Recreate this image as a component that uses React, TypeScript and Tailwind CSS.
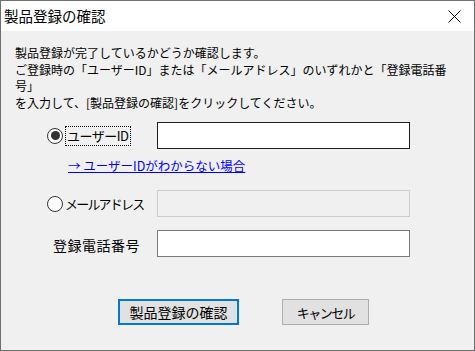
import React from "react";

function Radio({ checked }: { checked?: boolean }) {
  return (
    <span className="w-[16px] h-[16px] rounded-full border border-[#333333] bg-white flex items-center justify-center shrink-0">
      {checked ? <span className="w-[9px] h-[9px] rounded-full bg-[#333333]" /> : null}
    </span>
  );
}

export default function App() {
  return (
    <div className="w-[475px] h-[351px] border border-[#6f6f6f] bg-[#f0f0f0] flex flex-col font-['Noto_Sans_CJK_JP','Noto_Sans',sans-serif] text-black overflow-hidden">
      <div className="h-[30px] bg-white flex items-center justify-between shrink-0">
        <span className="pl-[3px] text-[14.5px] leading-none">製品登録の確認</span>
        <svg width="13" height="13" viewBox="0 0 13 13" className="mr-[13px]">
          <path d="M0.5 0.5 L12.5 12.5 M12.5 0.5 L0.5 12.5" stroke="#000" strokeWidth="1" fill="none" />
        </svg>
      </div>
      <div className="flex-1 flex flex-col pt-[14px]">
        <p className="pl-[14px] text-[12px] leading-[16.5px]">
          製品登録が完了しているかどうか確認します。
          <br />
          ご登録時の「ユーザーID」または「メールアドレス」のいずれかと「登録電話番
          <br />
          号」
          <br />
          を入力して、[製品登録の確認]をクリックしてください。
        </p>

        <div className="mt-[11px] flex items-center h-[27px]">
          <div className="w-[156px] flex items-center pl-[46px] shrink-0">
            <Radio checked />
            <span className="ml-[2px] h-[20px] flex items-center border border-dotted border-black px-[1px] text-[13px] tracking-[-0.5px] leading-none">
              ユーザーID
            </span>
          </div>
          <div className="w-[253px] h-[27px] border border-[#1e1e1e] bg-white" />
        </div>

        <div className="mt-[9px] pl-[67px] h-[15px] flex items-center">
          <span className="text-[12.5px] leading-[15px] text-[#0000ff] underline">→ ユーザーIDがわからない場合</span>
        </div>

        <div className="mt-[17px] flex items-center h-[27px]">
          <div className="w-[156px] flex items-center pl-[46px] shrink-0">
            <Radio />
            <span className="ml-[2px] text-[13px] tracking-[-1.8px] leading-none">メールアドレス</span>
          </div>
          <div className="w-[253px] h-[27px] border border-[#cccccc] bg-[#f0f0f0]" />
        </div>

        <div className="mt-[13px] flex items-center h-[27px]">
          <div className="w-[156px] pl-[52px] shrink-0">
            <span className="text-[14px] tracking-[0.5px] leading-none">登録電話番号</span>
          </div>
          <div className="w-[253px] h-[27px] border border-[#7a7a7a] bg-white" />
        </div>

        <div className="mt-[42px] flex items-center pl-[117px] gap-[43px]">
          <button className="w-[121px] h-[26px] border-2 border-[#0078d7] bg-[#e1e1e1] text-[14px] leading-none flex items-center justify-center">
            製品登録の確認
          </button>
          <button className="w-[87px] h-[26px] border border-[#adadad] bg-[#e1e1e1] text-[13px] tracking-[-1.5px] leading-none flex items-center justify-center">
            キャンセル
          </button>
        </div>
      </div>
    </div>
  );
}
